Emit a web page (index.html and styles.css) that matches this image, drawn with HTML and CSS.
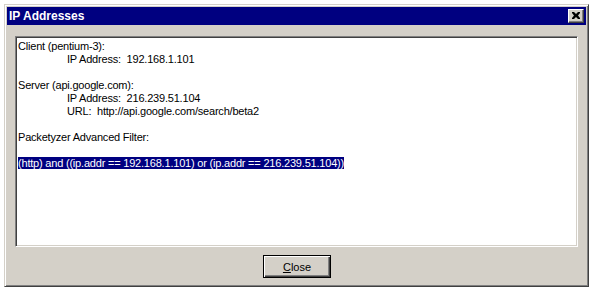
FILE: index.html
```html
<!DOCTYPE html>
<html lang="en">
<head>
    <meta charset="UTF-8">
    <title>IP Addresses</title>
    <link rel="stylesheet" href="styles.css">
</head>
<body>
    <div class="window">
        <div class="titlebar">
            <span class="title">IP Addresses</span>
            <div class="close-box">
                <svg width="8" height="7" viewBox="0 0 8 7">
                    <path d="M0 0h2l2 2 2-2h2v1l-2 2.5 2 2.5v1h-2l-2-2-2 2h-2v-1l2-2.5-2-2.5z" fill="#000"/>
                </svg>
            </div>
        </div>
        <div class="body">
            <div class="textbox">
                <div class="line">Client (pentium-3):</div>
                <div class="line tab">IP Address:  192.168.1.101</div>
                <div class="line"></div>
                <div class="line">Server (api.google.com):</div>
                <div class="line tab">IP Address:  216.239.51.104</div>
                <div class="line tab">URL:  http://api.google.com/search/beta2</div>
                <div class="line"></div>
                <div class="line">Packetyzer Advanced Filter:</div>
                <div class="line"></div>
                <div class="line"><span class="selected">(http) and ((ip.addr == 192.168.1.101) or (ip.addr == 216.239.51.104))</span></div>
            </div>
        </div>
        <div class="buttons">
            <button class="btn"><u>C</u>lose</button>
        </div>
    </div>
</body>
</html>
```

FILE: styles.css
```css
body {
    margin: 0;
    background: #fff;
    font-family: "Liberation Sans", Arial, sans-serif;
    font-size: 11px;
}
.window {
    margin: 4px;
    width: 585px;
    height: 283px;
    box-sizing: border-box;
    background: #d4d0c8;
    border: 1px solid;
    border-color: #d4d0c8 #404040 #404040 #d4d0c8;
    box-shadow: inset 1px 1px 0 #fff, inset -1px -1px 0 #808080;
    padding: 2px;
    display: flex;
    flex-direction: column;
}
.titlebar {
    height: 18px;
    background: #000080;
    color: #fff;
    display: flex;
    align-items: center;
    justify-content: space-between;
    padding: 0 2px 0 2px;
}
.title {
    font-family: "Liberation Sans", Arial, sans-serif;
    font-weight: bold;
    font-size: 12px;
}
.close-box {
    width: 16px;
    height: 14px;
    box-sizing: border-box;
    background: #d4d0c8;
    border: 1px solid;
    border-color: #fff #404040 #404040 #fff;
    box-shadow: inset -1px -1px 0 #808080;
    display: flex;
    align-items: center;
    justify-content: center;
    padding: 0 1px 1px 0;
}
.body {
    padding: 11px 8px 0 8px;
}
.textbox {
    height: 211px;
    box-sizing: border-box;
    background: #fff;
    border: 1px solid;
    border-color: #808080 #fff #fff #808080;
    box-shadow: inset 1px 1px 0 #404040, inset -1px -1px 0 #d4d0c8;
    padding: 3px 2px;
    color: #000;
    letter-spacing: -0.2px;
}
.line {
    height: 13px;
    line-height: 13px;
    white-space: pre;
}
.tab {
    padding-left: 49px;
}
.selected {
    background: #000080;
    color: #fff;
}
.buttons {
    display: flex;
    justify-content: center;
    padding-top: 8px;
}
.btn {
    width: 68px;
    height: 23px;
    font-family: "Liberation Sans", Arial, sans-serif;
    font-size: 11px;
    background: #d4d0c8;
    color: #000;
    border: 1px solid #000;
    box-shadow: inset 1px 1px 0 #fff, inset -1px -1px 0 #404040, inset -2px -2px 0 #808080;
    padding: 0;
    margin-left: 1px;
}
```
